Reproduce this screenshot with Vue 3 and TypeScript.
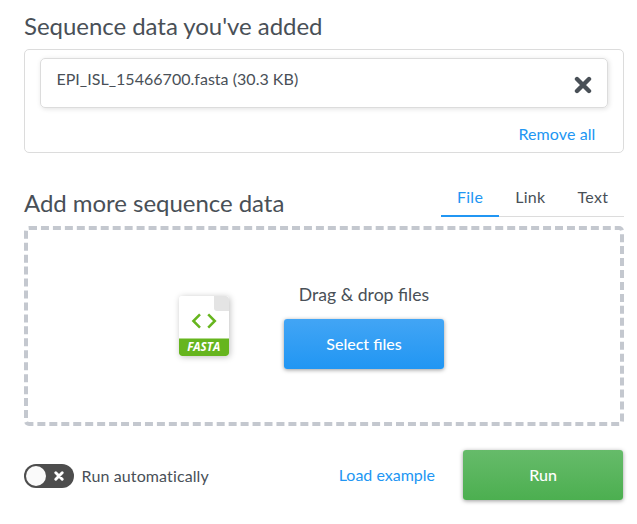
<script setup lang="ts">
import { ref } from 'vue'

interface SequenceFile {
  name: string
  size: string
}

const files = ref<SequenceFile[]>([{ name: 'EPI_ISL_15466700.fasta', size: '30.3 KB' }])
const tabs = ['File', 'Link', 'Text'] as const
const activeTab = ref<(typeof tabs)[number]>('File')
const autoRun = ref(false)
</script>

<template>
  <main class="page">
    <h2 class="title">Sequence data you've added</h2>
    <section class="added">
      <div v-for="file in files" :key="file.name" class="file-card">
        <span class="file-name">{{ file.name }} ({{ file.size }})</span>
        <button class="remove" aria-label="Remove">
          <svg width="18" height="18" viewBox="0 0 18 18">
            <path d="M3 3 15 15M15 3 3 15" />
          </svg>
        </button>
      </div>
      <a class="link remove-all">Remove all</a>
    </section>

    <header class="more">
      <h2 class="title">Add more sequence data</h2>
      <nav class="tabs">
        <a
          v-for="tab in tabs"
          :key="tab"
          class="tab"
          :class="{ active: tab === activeTab }"
          @click="activeTab = tab"
        >{{ tab }}</a>
      </nav>
    </header>

    <section class="dropzone">
      <svg class="file-icon" width="50" height="60" viewBox="0 0 50 60">
        <rect width="50" height="60" rx="3" fill="#fff" />
        <path d="M35 0H47a3 3 0 0 1 3 3V15H38a3 3 0 0 1-3-3Z" fill="#e4e4e4" />
        <path d="M0 42.5H50V57a3 3 0 0 1-3 3H3a3 3 0 0 1-3-3Z" fill="#66b51e" />
        <path d="M21 18.4 14.4 25l6.6 6.6M29.2 18.4l6.6 6.6-6.6 6.6" fill="none" stroke="#66b51e" stroke-width="2.5" />
        <text x="24.7" y="55.2" class="file-kind" text-anchor="middle" textLength="33" lengthAdjust="spacingAndGlyphs">FASTA</text>
      </svg>
      <div class="pick">
        <p class="hint">Drag &amp; drop files</p>
        <button class="button select">Select files</button>
      </div>
    </section>

    <footer class="actions">
      <button class="toggle" role="switch" :aria-checked="autoRun" @click="autoRun = !autoRun">
        <span class="knob"></span>
        <svg width="10" height="10" viewBox="0 0 10 10">
          <path d="M1.8 1.8 8.2 8.2M8.2 1.8 1.8 8.2" />
        </svg>
      </button>
      <span class="toggle-label">Run automatically</span>
      <a class="link example">Load example</a>
      <button class="button run">Run</button>
    </footer>
  </main>
</template>

<style>
body {
  background: #fff;
}
</style>

<style scoped>
.page {
  box-sizing: border-box;
  width: 637px;
  height: 524px;
  padding: 11px 13px 0 24px;
  font-family: Lato, "Liberation Sans", sans-serif;
  font-size: 16px;
  line-height: 24px;
  color: #495057;
}
.title {
  margin: 0;
  font-size: 24px;
  font-weight: 400;
  line-height: 29px;
  letter-spacing: -0.04px;
}
.added {
  box-sizing: border-box;
  display: flex;
  flex-direction: column;
  height: 104px;
  margin-top: 9px;
  padding: 8px 15px 0;
  border: 1px solid #dcdcdc;
  border-radius: 5px;
}
.file-card {
  box-sizing: border-box;
  display: flex;
  flex-shrink: 0;
  justify-content: space-between;
  height: 50px;
  padding: 8px 15px 0;
  border: 1px solid #dcdcdc;
  border-radius: 5px;
  box-shadow: 1px 1px 5px rgba(0, 0, 0, 0.12);
}
.file-name {
  padding-left: 0.4px;
  letter-spacing: 0.03px;
}
button {
  padding: 0;
  border: 0;
  font: inherit;
  cursor: pointer;
}
.remove {
  display: flex;
  width: 18px;
  height: 18px;
  margin-top: 9px;
  background: none;
}
.remove path {
  stroke: #495057;
  stroke-width: 4.4;
  stroke-linecap: round;
}
.link {
  color: #2196f3;
  cursor: pointer;
}
.remove-all {
  align-self: flex-end;
  margin: 14px 12.5px 0 0;
  letter-spacing: 0.1px;
}
.more {
  display: flex;
  align-items: flex-start;
  justify-content: space-between;
  height: 37px;
  margin-top: 36px;
}
.more .title {
  line-height: 28px;
}
.tabs {
  display: flex;
  margin-top: -8px;
}
.tab {
  box-sizing: border-box;
  height: 36px;
  padding: 4px 15.8px 0 16.2px;
  border-bottom: 1px solid #dcdcdc;
  letter-spacing: 0.3px;
  cursor: pointer;
}
.tab.active {
  border-bottom: 2px solid #2196f3;
  color: #2196f3;
}
.dropzone {
  box-sizing: border-box;
  display: flex;
  align-items: center;
  height: 200px;
  padding-left: 151px;
  border: 4px dashed #c4c8cf;
  border-radius: 5px;
}
.file-icon {
  border-radius: 3px;
  box-shadow: 1px 1px 6px rgba(0, 0, 0, 0.25);
}
.file-kind {
  fill: #fff;
  font: italic 700 11.5px "Open Sans", sans-serif;
}
.pick {
  margin-left: 55px;
  text-align: center;
}
.hint {
  margin: 0 0 12px;
  font-size: 17.6px;
  line-height: 24px;
}
.button {
  width: 160px;
  height: 50px;
  border-radius: 3px;
  color: #fff;
  font-weight: 500;
  box-shadow: 0 1px 4px rgba(0, 0, 0, 0.4);
}
.select {
  display: block;
  background: linear-gradient(#42a5f5, #2196f3);
}
.actions {
  display: flex;
  align-items: center;
  margin-top: 24px;
}
.toggle {
  box-sizing: border-box;
  display: flex;
  align-items: center;
  width: 50px;
  height: 24px;
  margin-top: 2px;
  padding: 0 10px 0 2px;
  justify-content: space-between;
  border-radius: 12px;
  background: #4d4d4d;
}
.knob {
  width: 20px;
  height: 20px;
  border-radius: 50%;
  background: #fafafa;
}
.toggle path {
  stroke: #fff;
  stroke-width: 2.9;
  stroke-linecap: round;
}
.toggle-label {
  margin: 2px 0 0 7.6px;
  font-variant-ligatures: none;
  letter-spacing: 0.12px;
}
.example {
  margin: 0 28px 0 auto;
}
.run {
  margin-right: 1px;
  background: linear-gradient(#66bb6a, #4caf50);
}
</style>
